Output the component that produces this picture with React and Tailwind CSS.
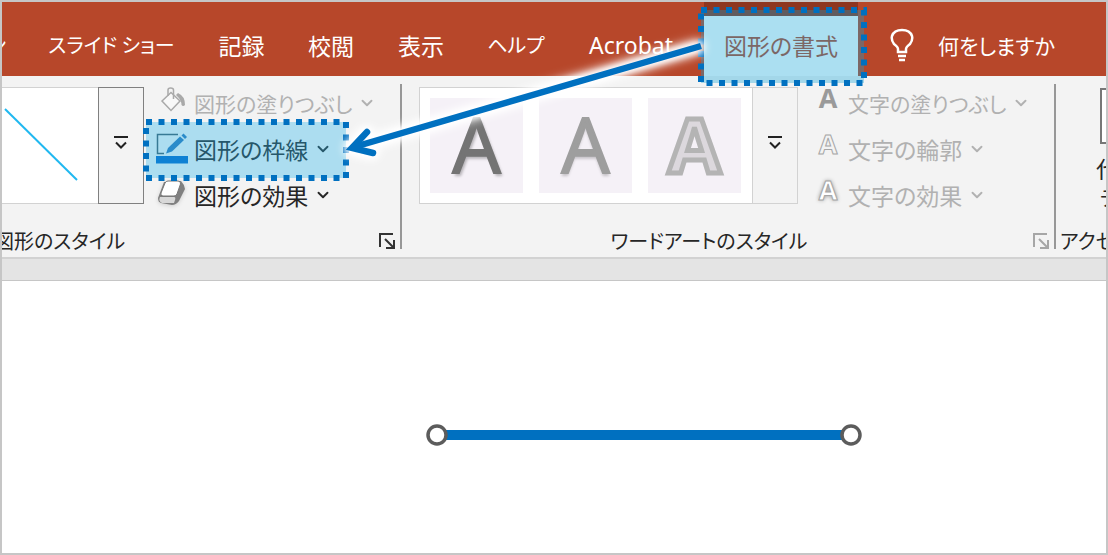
import { ChevronDown } from 'lucide-react';

const TABS = [
  { label: 'スライド ショー', width: 'w-[171px] text-xl' },
  { label: '記録', width: 'w-[89px]' },
  { label: '校閲', width: 'w-[90px]' },
  { label: '表示', width: 'w-[90px]' },
  { label: 'ヘルプ', width: 'w-[100px] text-xl' },
  { label: 'Acrobat', width: "w-[138px] pr-2 font-['Noto_Sans']" },
];

function BucketIcon() {
  return (
    <svg width="32" height="32" viewBox="0 0 32 32" fill="none" stroke="#a9a9a9" strokeWidth="1.5">
      <path d="M6 14 15 5.500 24 14 15 23.500Z" fill="#f8f8f8" />
      <path d="M12 9V3Q12 1 14.500 1Q17.500 1 17.500 3V12" />
      <path d="M22 6Q29 9 29 18Q27 20 25.500 18Q25.500 13 20 8Z" fill="#a9a9a9" stroke="none" />
    </svg>
  );
}

function PenIcon() {
  return (
    <svg width="32" height="32" viewBox="0 0 32 32" fill="none">
      <path d="M22 1.500H1.500V20.500H8" stroke="#3f5a68" strokeWidth="1.500" />
      <path d="M10 20.500 12 15 24 3.500 28 7 16 18.500Z" fill="#2b76b8" />
      <path d="M25.500 2.500 27.500 .5 31 4 29 6Z" fill="#2b76b8" />
      <path d="M0 23H32V30.500H0Z" fill="#0066c8" />
    </svg>
  );
}

function EffectIcon() {
  return (
    <svg width="32" height="32" viewBox="0 0 32 32" fill="none" className="drop-shadow-sm">
      <path d="M8 3 25 2Q28 5 29 10L23 22Q20 26 16 26L5 24Q2 23 2 19Z" fill="#808080" />
      <path d="M9 4Q10 2 12 2H22Q25 2 24.500 5L21 15Q20 17 18 17H7Q4 17 5 14Z" fill="#fff" stroke="#777" />
      <path d="M4 18H18Q20 18 19 21L18 24H6Q2 22 4 18Z" fill="#d8d8d8" />
    </svg>
  );
}

function Launcher({ muted }) {
  return (
    <button aria-label="オプション" className={muted ? 'text-[#a6a6a6]' : 'text-[#333]'}>
      <svg width="18" height="18" viewBox="0 0 18 18" fill="none" stroke="currentColor" strokeWidth="2">
        <path d="M2 15V2H15M7 7 15 15M16 8V16H8" />
      </svg>
    </button>
  );
}

function MoreButton({ dark }) {
  return (
    <button
      aria-label="その他"
      className={`flex w-[46px] items-center justify-center border bg-[#f3f3f3] pb-1.5 ${dark ? 'border-[#808080]' : 'border-[#d2d2d2]'}`}
    >
      <svg width="14" height="14" viewBox="0 0 14 14" fill="none" stroke="#222" strokeWidth="2">
        <path d="M0 1H14M2 6.500 7 11.500 12 6.500" />
      </svg>
    </button>
  );
}

function Command({ icon, label, muted, small }) {
  return (
    <button className={`flex h-[46px] items-center gap-[6px] ${muted ? 'text-[#b1b1b1]' : 'text-[#262626]'}`}>
      {icon}
      <span className={small ? 'text-[21px]' : ''}>{label}</span>
      <ChevronDown size={18} strokeWidth={2.5} />
    </button>
  );
}

function LetterIcon({ className }) {
  return <span className={`w-7 pb-2.5 font-['Open_Sans',sans-serif] text-[27px] font-bold ${className}`}>A</span>;
}

// Dotted frame with a translucent fill, laid over the command it points out
function Highlight({ className, fill }) {
  return (
    <svg className={`pointer-events-none absolute overflow-visible ${className}`}>
      <rect width="100%" height="100%" fill={fill} fillOpacity=".35" />
      <rect width="100%" height="100%" fill="none" stroke="#0070c0" strokeWidth="6" strokeDasharray="6 6.5" />
    </svg>
  );
}

export default function App() {
  return (
    <div className="relative flex min-h-screen flex-col overflow-hidden border-2 border-[#c6c6c6] bg-white font-['Noto_Sans_CJK_JP',sans-serif] text-[23px] leading-8 [font-feature-settings:'palt']">
      <header className="flex h-[74px] overflow-hidden bg-[#b7472a] text-white">
        <div className="flex w-6 shrink-0 items-center justify-end overflow-hidden pt-3 pr-5 text-xl">ン</div>
        <nav className="flex shrink-0">
          {TABS.map((t) => (
            <button key={t.label} className={`pt-3 ${t.width}`}>
              {t.label}
            </button>
          ))}
          <button className="w-[154px] border-t-[14px] border-[#8e3620] bg-white pb-0.5 text-[#b7472a]">
            図形の書式
          </button>
        </nav>
        <label className="flex min-w-0 flex-1 items-center gap-6 pt-3 pl-8">
          <svg width="24" height="34" viewBox="0 0 24 34" fill="none" stroke="currentColor" strokeWidth="2.500" className="shrink-0">
            <path d="M8 24V21Q8 19 4 16Q1 12 2 8Q4 2 12 2T22 8Q23 12 20 16Q16 19 16 21V24Z" />
            <path d="M8 28H16M9 32H15" />
          </svg>
          <input
            placeholder="何をしますか"
            className="w-full min-w-0 bg-transparent text-[21px] placeholder:text-white placeholder:opacity-100 focus:outline-none"
          />
        </label>
      </header>

      <section className="flex h-[183px] overflow-hidden border-b-2 border-[#d2d2d2] bg-[#f3f3f3] pb-1">
        <div className="flex w-[398px] shrink-0 flex-col">
          <div className="flex h-[155px] pt-1">
            <div className="mt-[7px] flex h-[117px]">
              <div className="w-24 border-y border-[#d2d2d2] bg-white">
                <svg width="95" height="115" viewBox="0 0 95 115">
                  <path d="M3 21 75 92" stroke="#20b8f0" strokeWidth="2" />
                </svg>
              </div>
              <MoreButton dark />
            </div>
            <div className="ml-3">
              <Command icon={<BucketIcon />} label="図形の塗りつぶし" muted small />
              <Command icon={<PenIcon />} label="図形の枠線" />
              <Command icon={<EffectIcon />} label="図形の効果" />
            </div>
          </div>
          <div className="flex items-center justify-between pr-1 text-xl leading-5 text-[#262626]">
            <span className="-ml-2">図形のスタイル</span>
            <Launcher />
          </div>
        </div>
        <div className="mt-2 mb-1 w-0.5 shrink-0 bg-[#979797]" />

        <div className="flex w-[652px] shrink-0 flex-col">
          <div className="flex h-[155px] pt-1 pl-[17px]">
            <div className="mt-[7px] flex h-[117px]">
              <div className="flex gap-4 border border-r-0 border-[#d2d2d2] bg-white p-[10px] pr-[11px] font-['Open_Sans',sans-serif] text-[76px] leading-[90px]">
                <button className="w-[93px] bg-[#f5f1f7] pb-1 text-[#747474] [-webkit-text-stroke:2px_#747474] [text-shadow:2px_3px_3px_#0004]">A</button>
                <button className="w-[93px] bg-[#f5f1f7] pb-1 text-[#9e9e9e] [-webkit-text-stroke:2px_#9e9e9e] [text-shadow:0_3px_3px_#0003]">A</button>
                <button className="w-[93px] bg-[#f5f1f7] pb-1 font-bold text-[#dcd8dd] [-webkit-text-stroke:5px_#b4b4b4]">A</button>
              </div>
              <MoreButton />
            </div>
            <div className="ml-4">
              <Command icon={<LetterIcon className="text-[#9a9a9a]" />} label="文字の塗りつぶし" muted small />
              <Command
                icon={<LetterIcon className="text-[#f3f3f3] [-webkit-text-stroke:1px_#a6a6a6]" />}
                label="文字の輪郭"
                muted
              />
              <Command
                icon={<LetterIcon className="text-white [-webkit-text-stroke:1px_#a6a6a6] [text-shadow:0_0_4px_#888]" />}
                label="文字の効果"
                muted
              />
            </div>
          </div>
          <div className="flex items-center pr-1 text-xl leading-5 text-[#262626]">
            <span className="flex-1 pr-4 text-center">ワードアートのスタイル</span>
            <Launcher muted />
          </div>
        </div>
        <div className="mt-2 mb-1 w-0.5 shrink-0 bg-[#979797]" />

        <div className="flex min-w-0 flex-1 flex-col overflow-hidden pl-1 whitespace-nowrap text-[#262626]">
          <div className="flex h-[155px] flex-col pt-3 pl-9">
            <div className="ml-1 flex h-14 w-14 shrink-0 items-end border-2 border-[#777] bg-white p-1">
              <div className="h-3 w-8 bg-[#3f8fca]" />
            </div>
            <span className="pt-2 leading-8">代替</span>
            <span className="pl-1 text-xl leading-7">テキスト</span>
          </div>
          <span className="text-xl leading-5">アクセシビリティ</span>
        </div>
      </section>
      <div className="h-[22px] border-b border-[#c6c6c6] bg-[#e4e4e4]" />

      <main className="relative flex-1">
        <svg className="absolute top-[142px] left-[423px]" width="438" height="24" viewBox="0 0 438 24">
          <path d="M12 12H426" stroke="#0070c0" strokeWidth="10" />
          <circle cx="12" cy="12" r="9" fill="#fff" stroke="#5c5c5c" strokeWidth="3.500" />
          <circle cx="426" cy="12" r="9" fill="#fff" stroke="#5c5c5c" strokeWidth="3.500" />
        </svg>
      </main>

      <Highlight className="top-2 left-[699px] h-[73px] w-[163px]" fill="#0fa3d7" />
      <Highlight className="top-[120px] left-[144px] h-14 w-[200px]" fill="#28b4eb" />
      <svg
        className="pointer-events-none absolute top-[30px] left-[330px] [filter:drop-shadow(0_0_3px_#fff)_drop-shadow(0_0_4px_#fff)_drop-shadow(0_0_4px_#fff)]"
        width="390"
        height="140"
        viewBox="332 32 390 140"
        fill="none"
        stroke="#0070c0"
      >
        <path d="M701 46 354 147" strokeWidth="6.500" />
        <path d="M367 132 352 148 373 153" strokeWidth="6.500" strokeLinecap="round" />
      </svg>
    </div>
  );
}
